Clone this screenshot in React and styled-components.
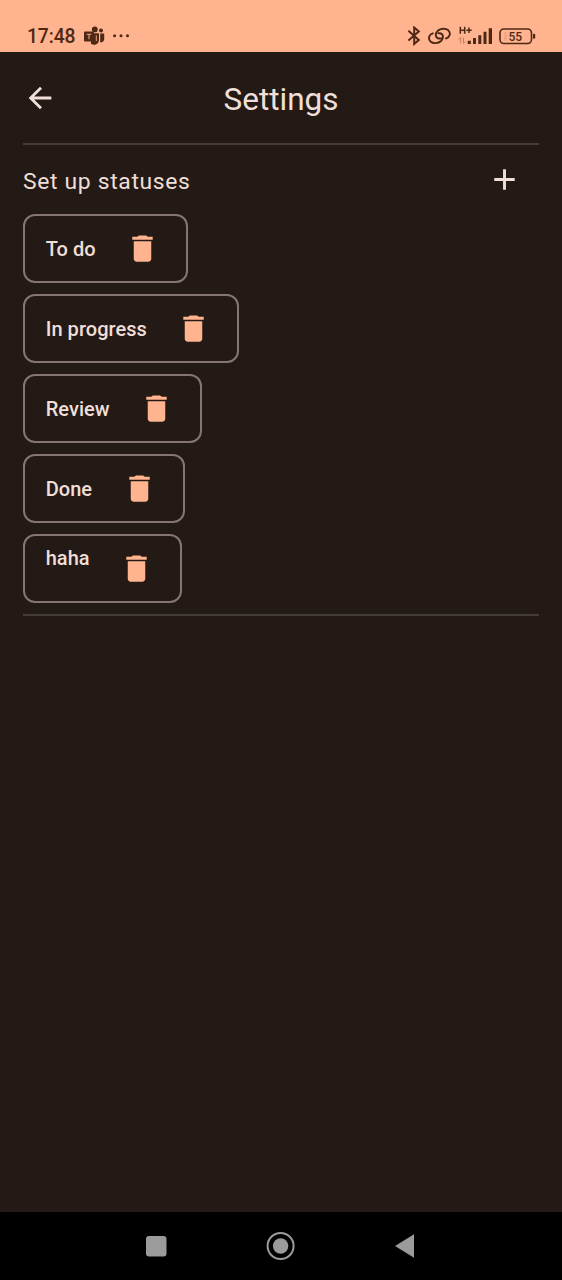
import React from "react";
import styled, { createGlobalStyle } from "styled-components";

const GlobalStyle = createGlobalStyle`
  *, *::before, *::after { box-sizing: border-box; }
  body { margin: 0; background: #231a15; font-family: Roboto, sans-serif; }
  svg { display: block; flex: none; }
`;

const Screen = styled.div`
  width: 562px;
  height: 1280px;
  display: flex;
  flex-direction: column;
  background: #231a15;
  color: #f0dfd8;
  overflow: hidden;
`;

const StatusBar = styled.header`
  height: 52px;
  flex: none;
  display: flex;
  justify-content: space-between;
  padding: 22px 26px 0 27px;
  background: #ffb38e;
  color: #4f2815;
`;

const StatusGroup = styled.div`
  display: flex;
  align-items: center;
  height: 28px;
  gap: ${(p) => p.$gap}px;
`;

const Clock = styled.span`
  font-size: 19.3px;
  line-height: 28px;
  width: 49px;
  margin-top: 1px;
  font-weight: 500;
  letter-spacing: -0.1px;
  white-space: nowrap;
`;

const Content = styled.main`
  flex: 1;
  padding: 0 23px;
`;

const TopBar = styled.div`
  height: 91px;
  display: grid;
  grid-template-columns: 34px 1fr 34px;
  align-items: center;
`;

const IconButton = styled.button`
  display: flex;
  border: 0;
  padding: 0;
  background: none;
  color: ${(p) => (p.$accent ? "#ffb38e" : "#f0dfd8")};
`;

const Title = styled.h1`
  margin: 5px 0 0;
  text-align: center;
  font-size: 31.5px;
  line-height: 40px;
  font-weight: 400;
`;

const Divider = styled.hr`
  margin: 0;
  border: 0;
  height: 2px;
  background: #443b3b;
`;

const SectionHeader = styled.div`
  height: 69px;
  display: flex;
  align-items: center;
  justify-content: space-between;
  padding-right: 17px;
`;

const SectionTitle = styled.h2`
  margin: 4px 0 0;
  font-size: 22.9px;
  line-height: 34px;
  font-weight: 400;
  letter-spacing: 0.66px;
`;

const StatusList = styled.ul`
  margin: 0;
  padding: 0 0 11px;
  list-style: none;
  display: flex;
  flex-direction: column;
  align-items: flex-start;
  gap: 11px;
`;

const StatusChip = styled.li`
  width: ${(p) => p.$width}px;
  height: 69px;
  display: flex;
  align-items: center;
  justify-content: space-between;
  padding: 0 26.5px 0 20.7px;
  border: 2px solid #85766f;
  border-radius: 12px;
`;

const StatusLabel = styled.span`
  font-size: 20px;
  line-height: 28px;
  font-weight: 500;
  letter-spacing: 0.05px;
  white-space: nowrap;
  align-self: ${(p) => (p.$raised ? "flex-start" : "center")};
  margin-top: ${(p) => (p.$raised ? 8 : 1)}px;
`;

const NavBar = styled.nav`
  height: 68px;
  flex: none;
  display: flex;
  align-items: center;
  justify-content: space-between;
  padding: 0 147px 0 145px;
  background: #000;
  color: #9b9b9b;
`;

const TeamsIcon = () => (
  <svg width="21" height="20" viewBox="0 0 21 20" fill="#4f2815">
    <circle cx="10.800" cy="3.400" r="2.900" />
    <circle cx="17" cy="4.400" r="2" />
    <path d="M7 7.300h8v7a5 5 0 0 1-8 3.500zM16.200 7.500h4v6a3.300 3.300 0 0 1-4 2.800z" />
    <rect x="0" y="5.500" width="9.800" height="10" rx="1" />
    <path d="M2.700 8.300h4.600M5 8.300v5" stroke="#d9946f" strokeWidth="1.200" />
    <path d="M12.300 9.500v5.500" stroke="#ffb38e" strokeWidth=".9" />
  </svg>
);

const MoreIcon = () => (
  <svg width="18" height="4" viewBox="0 0 18 4" fill="#4f2815">
    <circle cx="1.600" cy="1.700" r="1.500" />
    <circle cx="8" cy="1.700" r="1.500" />
    <circle cx="14.500" cy="1.700" r="1.500" />
  </svg>
);

const BluetoothIcon = () => (
  <svg width="14" height="20" viewBox="0 0 14 20" fill="none" stroke="#4f2815" strokeWidth="2">
    <path d="M1.400 4.800l10.400 9.200L7.200 18V1.500l4.600 4L1.400 14.500" />
  </svg>
);

const LinkIcon = () => (
  <svg width="23" height="18" viewBox="0 0 23 18" fill="none" stroke="#4f2815" strokeWidth="1.900" strokeLinecap="round">
    <path d="M18 11.500C22 10.300 23 6 20.300 3.300C17.800 1 12.500 1.200 9.700 3.800C6.500 7 7.600 11.300 11.200 11.500H14" />
    <path d="M4.800 6.300C.8 7.500-.2 11.800 2.500 14.500C5 16.800 10.300 16.600 13.100 14C16.300 10.800 15.200 6.500 11.600 6.300H10.400" />
  </svg>
);

const SignalIcon = () => (
  <svg width="34" height="20" viewBox="0 0 34 20" fill="#4f2815">
    <path d="M2.300.700v7M6.700.700v7M2.300 4.200h4.400M8.300 4.300h5.400M11 1.600v5.400" stroke="#4f2815" strokeWidth="1.500" />
    <path d="M2.700 11.500v6M.8 13.500l1.900-2M5.500 11.500v6M7.400 15.500l-1.900 2" stroke="#c77f5e" strokeWidth="1" />
    <path d="M9.700 14.800h3.200V18H9.700zM15 12h3v6h-3zM20.300 9.300h3V18h-3zM25.500 5.700h3V18h-3zM30.700 2.200H34V18h-3.300z" />
  </svg>
);

const BatteryIcon = () => (
  <svg width="37" height="17" viewBox="0 0 37 17">
    <path d="M5 4h3v8.500H5z" fill="#f4a681" />
    <rect x="1" y="1" width="31.500" height="14.500" rx="4" fill="none" stroke="#4f2815" strokeWidth="1.600" />
    <rect x="34" y="5.700" width="2.200" height="5" rx="1" fill="#4f2815" />
    <text x="16.300" y="12.500" fontSize="12" fontWeight="500" textAnchor="middle" fill="#4f2815">55</text>
  </svg>
);

const BackIcon = () => (
  <svg width="34" height="34" viewBox="0 0 24 24" fill="currentColor">
    <path d="M20 11H7.830l5.590-5.590L12 4l-8 8 8 8 1.410-1.410L7.830 13H20z" />
  </svg>
);

const AddIcon = () => (
  <svg width="35" height="35" viewBox="0 0 24 24" fill="currentColor">
    <path d="M19 13h-6v6h-2v-6H5v-2h6V5h2v6h6z" />
  </svg>
);

const TrashIcon = () => (
  <svg width="35" height="35" viewBox="0 0 24 24" fill="currentColor">
    <path d="M6 19c0 1.100.9 2 2 2h8c1.100 0 2-.9 2-2V7H6zM19 4h-3.500l-1-1h-5l-1 1H5v2h14z" />
  </svg>
);

const RecentsIcon = () => (
  <svg width="22" height="22" viewBox="0 0 22 22" fill="currentColor">
    <rect x="1" y="1" width="20.500" height="20.500" rx="3" />
  </svg>
);

const HomeIcon = () => (
  <svg width="30" height="30" viewBox="0 0 30 30" fill="currentColor">
    <circle cx="14.600" cy="15" r="13" fill="none" stroke="currentColor" strokeWidth="2" />
    <circle cx="14.600" cy="15" r="7.700" />
  </svg>
);

const NavBackIcon = () => (
  <svg width="20" height="24" viewBox="0 0 20 24" fill="currentColor">
    <path d="M0 12L19 .300v23.400z" />
  </svg>
);

const statuses = [
  { label: "To do", width: 165 },
  { label: "In progress", width: 216 },
  { label: "Review", width: 179 },
  { label: "Done", width: 162 },
  { label: "haha", width: 159, raised: true },
];

export default function App() {
  return (
    <Screen>
      <GlobalStyle />
      <StatusBar>
        <StatusGroup $gap={8}>
          <Clock>17:48</Clock>
          <TeamsIcon />
          <MoreIcon />
        </StatusGroup>
        <StatusGroup $gap={7}>
          <BluetoothIcon />
          <LinkIcon />
          <SignalIcon />
          <BatteryIcon />
        </StatusGroup>
      </StatusBar>
      <Content>
        <TopBar>
          <IconButton aria-label="Back"><BackIcon /></IconButton>
          <Title>Settings</Title>
        </TopBar>
        <Divider />
        <SectionHeader>
          <SectionTitle>Set up statuses</SectionTitle>
          <IconButton aria-label="Add status"><AddIcon /></IconButton>
        </SectionHeader>
        <StatusList>
          {statuses.map((s) => (
            <StatusChip key={s.label} $width={s.width}>
              <StatusLabel $raised={s.raised}>{s.label}</StatusLabel>
              <IconButton $accent aria-label={`Delete ${s.label}`}><TrashIcon /></IconButton>
            </StatusChip>
          ))}
        </StatusList>
        <Divider />
      </Content>
      <NavBar>
        <RecentsIcon />
        <HomeIcon />
        <NavBackIcon />
      </NavBar>
    </Screen>
  );
}
